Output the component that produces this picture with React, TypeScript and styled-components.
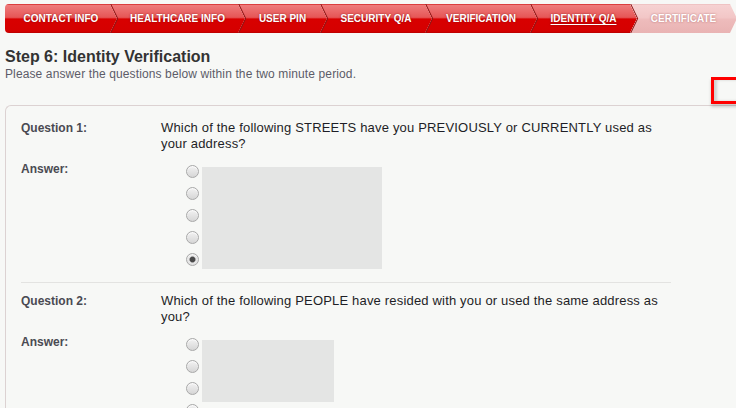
import React from 'react';
import styled, { createGlobalStyle, css } from 'styled-components';

const GlobalStyle = createGlobalStyle`
  html, body {
    margin: 0;
    padding: 0;
    overflow: hidden;
    background-color: #f7f8f6;
  }
`;

const Page = styled.div`
  position: relative;
  font-family: Arial, "Liberation Sans", sans-serif;
  padding: 4px 0 0 5px;
  height: 404px;
`;

const StepBar = styled.div`
  display: flex;
  height: 29px;
`;

const Step = styled.div<{ $w: number; $first?: boolean; $state: 'done' | 'current' | 'todo' }>`
  position: relative;
  flex: 0 0 auto;
  width: ${(p) => p.$w}px;
  height: 29px;
  display: flex;
  align-items: center;
  justify-content: center;
  margin-left: ${(p) => (p.$first ? '0' : '-7px')};
  border-radius: ${(p) => (p.$first ? '4px 0 0 4px' : '0')};
  clip-path: ${(p) =>
    p.$first
      ? 'polygon(0 0, calc(100% - 7px) 0, 100% 50%, calc(100% - 7px) 100%, 0 100%)'
      : 'polygon(0 0, calc(100% - 7px) 0, 100% 50%, calc(100% - 7px) 100%, 0 100%, 7px 50%)'};
  background: ${(p) =>
    p.$state === 'todo'
      ? 'linear-gradient(#e8b4b4 0, #f6d2d2 1px, #f2c6c6 48%, #eebcbc 52%, #e9b3b3 100%)'
      : 'linear-gradient(#c80000 0, #ee7c7c 1px, #e65656 46%, #d80000 52%, #d50000 94%, #b80000 100%)'};
  color: #fff;
  font-size: 10px;
  font-weight: bold;
  text-shadow: ${(p) =>
    p.$state === 'todo' ? '0 0 2px rgba(160, 80, 80, 0.8)' : '0 0 2px rgba(110, 0, 0, 0.7)'};
  text-decoration: ${(p) => (p.$state === 'current' ? 'underline' : 'none')};
  text-underline-offset: 2px;

  ${(p) =>
    !p.$first &&
    css`
      &::before {
        content: '';
        position: absolute;
        inset: 0;
        background: #8e1414;
        clip-path: polygon(0 0, 1.2px 0, 8.2px 50%, 1.2px 100%, 0 100%, 7px 50%);
      }
    `}
`;

const Heading = styled.h1`
  margin: 15px 0 0;
  font-size: 16px;
  line-height: 18px;
  font-weight: bold;
  color: #333;
`;

const Subtitle = styled.p`
  margin: 1px 0 0;
  font-size: 12px;
  line-height: 14px;
  letter-spacing: 0.12px;
  color: #5c5c68;
`;

const FocusTab = styled.div`
  position: absolute;
  top: 77px;
  left: 711px;
  width: 40px;
  height: 27px;
  box-sizing: border-box;
  border: 3px solid #ff0000;
  background: #f7f8f6;
  box-shadow: 0 3px 3px rgba(0, 0, 0, 0.18), inset 3px 0 3px rgba(0, 0, 0, 0.16);
  z-index: 2;
`;

const Panel = styled.div`
  margin-top: 24px;
  width: 780px;
  border-top: 1px solid #dcd2d2;
  border-left: 1px solid #dcd2d2;
  border-radius: 6px 0 0 0;
  padding: 14px 0 0 15px;
  height: 400px;
`;

const Inner = styled.div`
  width: 650px;
`;

const Row = styled.div<{ $gap?: number }>`
  display: grid;
  grid-template-columns: 140px 1fr;
  margin-top: ${(p) => p.$gap ?? 0}px;
`;

const Label = styled.div`
  font-size: 12px;
  line-height: 16px;
  font-weight: bold;
  color: #4a4a52;
`;

const QuestionText = styled.div`
  font-size: 13px;
  line-height: 16px;
  letter-spacing: 0.18px;
  color: #1e1e26;
`;

const Answers = styled.div`
  display: flex;
  align-items: flex-start;
  padding-left: 25px;
`;

const RadioList = styled.div`
  display: flex;
  flex-direction: column;
  gap: 9px;
  padding-top: 4px;
`;

const Radio = styled.span<{ $checked?: boolean }>`
  display: block;
  width: 13px;
  height: 13px;
  box-sizing: border-box;
  border-radius: 50%;
  border: 1px solid #a8a8a8;
  background: linear-gradient(#f2f2f2, #d6d6d6);
  box-shadow: inset 0 1px 1px rgba(255, 255, 255, 0.8);

  ${(p) =>
    p.$checked &&
    css`
      background: radial-gradient(circle, #4a4a4a 0 2.4px, #8a8a8a 2.8px, #e8e8e8 3.6px, #d8d8d8 100%);
    `}
`;

const Placeholder = styled.div<{ $w: number; $h: number }>`
  width: ${(p) => p.$w}px;
  height: ${(p) => p.$h}px;
  margin: 6px 0 0 3px;
  background: #e4e5e4;
`;

const Divider = styled.div`
  height: 1px;
  background: #e3e3e1;
  margin: 13px 0 10px;
`;

const steps: { label: string; w: number; state: 'done' | 'current' | 'todo' }[] = [
  { label: 'CONTACT INFO', w: 112, state: 'done' },
  { label: 'HEALTHCARE INFO', w: 135, state: 'done' },
  { label: 'USER PIN', w: 89, state: 'done' },
  { label: 'SECURITY Q/A', w: 112, state: 'done' },
  { label: 'VERIFICATION', w: 112, state: 'done' },
  { label: 'IDENTITY Q/A', w: 107, state: 'current' },
  { label: 'CERTIFICATE', w: 107, state: 'todo' },
];

const questions = [
  {
    label: 'Question 1:',
    text: 'Which of the following STREETS have you PREVIOUSLY or CURRENTLY used as your address?',
    options: 5,
    checked: 4,
    box: { w: 180, h: 102 },
  },
  {
    label: 'Question 2:',
    text: 'Which of the following PEOPLE have resided with you or used the same address as you?',
    options: 4,
    checked: -1,
    box: { w: 132, h: 62 },
  },
];

const App: React.FC = () => {
  return (
    <Page>
      <GlobalStyle />
      <StepBar>
        {steps.map((s, i) => (
          <Step key={s.label} $w={s.w} $first={i === 0} $state={s.state}>
            {s.label}
          </Step>
        ))}
      </StepBar>

      <Heading>Step 6: Identity Verification</Heading>
      <Subtitle>Please answer the questions below within the two minute period.</Subtitle>

      <FocusTab />

      <Panel>
        <Inner>
          {questions.map((q, qi) => (
            <React.Fragment key={q.label}>
              {qi > 0 && <Divider />}
              <Row>
                <Label>{q.label}</Label>
                <QuestionText>{q.text}</QuestionText>
              </Row>
              <Row $gap={9}>
                <Label>Answer:</Label>
                <Answers>
                  <RadioList>
                    {Array.from({ length: q.options }).map((_, i) => (
                      <Radio key={i} $checked={i === q.checked} />
                    ))}
                  </RadioList>
                  <Placeholder $w={q.box.w} $h={q.box.h} />
                </Answers>
              </Row>
            </React.Fragment>
          ))}
        </Inner>
      </Panel>
    </Page>
  );
};

export default App;
